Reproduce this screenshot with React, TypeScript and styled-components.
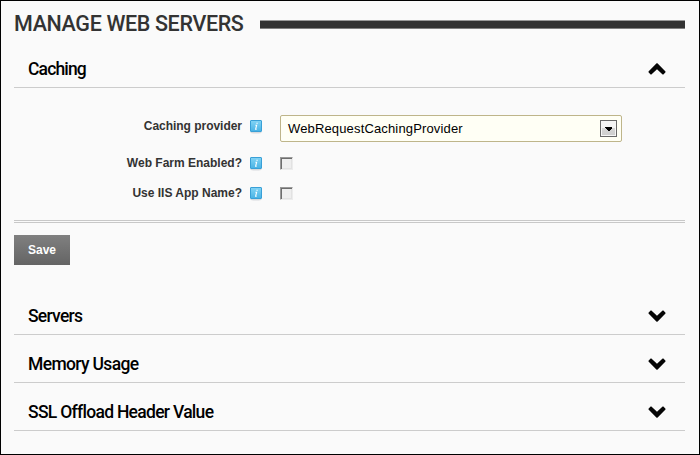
import React from "react";
import styled, { createGlobalStyle } from "styled-components";

const GlobalStyle = createGlobalStyle`
  * { box-sizing: border-box; }
  body { margin: 0; background: #fafafa; }
`;

const Page = styled.main`
  height: 455px;
  padding: 0 14px 0 13px;
  border: 1px solid #000;
  background: #fafafa;
  font-family: "Liberation Sans", Arial, sans-serif;
  overflow: hidden;
`;

const TitleRow = styled.header`
  display: flex;
  align-items: center;
  height: 39px;
  padding-top: 8px;
`;

const Title = styled.h1`
  flex: 0 0 246px;
  margin: 0;
  padding-bottom: 2px;
  color: #333;
  font: 500 21.5px/29px Roboto, sans-serif;
  letter-spacing: -0.36px;
  white-space: nowrap;
`;

const TitleRule = styled.div`
  flex: 1;
  height: 9px;
  background: #333;
  border-top: 1px solid #999;
  border-bottom: 1px solid #808080;
`;

const SectionHeader = styled.section`
  display: flex;
  align-items: center;
  justify-content: space-between;
  height: 48px;
  padding: 11px 19px 0 14px;
  border-bottom: 1px solid #ccc;
`;

const SectionTitle = styled.h2<{ $spacing: number }>`
  margin: 0;
  color: #000;
  font: 500 17.5px/36px Roboto, sans-serif;
  letter-spacing: ${({ $spacing }) => $spacing}px;
  white-space: nowrap;
`;

const Chevron = styled.svg<{ $open?: boolean }>`
  width: 18px;
  height: 12px;
  transform: ${({ $open }) => ($open ? "rotate(180deg)" : "none")};
`;

const Form = styled.form`
  display: grid;
  grid-template-rows: 27px 30px 30px;
  padding-top: 27px;
  height: 132px;
`;

const Row = styled.div<{ $offset?: number }>`
  display: grid;
  grid-template-columns: 228px 38px 342px;
  align-items: center;
  padding-top: ${({ $offset = 0 }) => $offset}px;
`;

const Label = styled.label<{ $spacing: number }>`
  justify-self: end;
  color: #333;
  font: bold 12px/15px "Liberation Sans", Arial, sans-serif;
  letter-spacing: ${({ $spacing }) => $spacing}px;
  margin-right: ${({ $spacing }) => -$spacing}px;
  padding-bottom: 4px;
`;

const InfoIcon = styled.svg`
  width: 14px;
  height: 15px;
  margin: 0 0 4px 7px;
`;

const Select = styled.div`
  display: flex;
  align-items: center;
  justify-content: space-between;
  height: 27px;
  padding: 0 4px 0 7px;
  border: 1px solid #beb58a;
  border-radius: 2px;
  background: #fffff5;
  color: #000;
  font-size: 13px;
  letter-spacing: 0.15px;
`;

const SelectArrow = styled.span`
  display: grid;
  place-items: center;
  width: 17px;
  height: 17px;
  border: 1px solid #686868;
  box-shadow: inset 0 0 0 1px #f5f5f5;
  background: linear-gradient(#f4f4f4 48%, #d5d5d5 50%, #cecece);
  svg { width: 7px; height: 4px; display: block; }
`;

const Checkbox = styled.span`
  width: 13px;
  height: 13px;
  margin-bottom: 4px;
  border: 1px solid #ececec;
  border-top-color: #999;
  border-left-color: #999;
  background: #eee;
  box-shadow: inset 1px 1px #6d6d6d, inset -1px -1px #e2e2e2;
`;

const Divider = styled.div`
  height: 3px;
  border-top: 1px solid #c8c8c8;
  border-bottom: 1px solid #c8c8c8;
`;

const SaveButton = styled.button`
  display: block;
  width: 56px;
  height: 30px;
  margin: 12px 0 22px;
  padding: 0;
  border: 0;
  background: linear-gradient(#808080, #646464);
  color: #fff;
  font: bold 12px/30px "Liberation Sans", Arial, sans-serif;
`;

function Info() {
  return (
    <InfoIcon viewBox="0 0 14 15" aria-hidden="true">
      <defs>
        <linearGradient id="info" x2="0" y2="1">
          <stop stopColor="#83d4f5" />
          <stop offset="1" stopColor="#47b2e5" />
        </linearGradient>
      </defs>
      <ellipse cx="7" cy="13.6" rx="5.5" ry="1" fill="#d8dadd" />
      <rect x="1.5" y="1.5" width="11" height="11" rx=".5" fill="url(#info)" stroke="#39a0d7" />
      <path d="M7.4 4.3h1.3M6.4 6.3h1.2L6.6 10.3h1.1" fill="none" stroke="#fff" strokeWidth="1.1" />
    </InfoIcon>
  );
}

function Section({ title, spacing, open }: { title: string; spacing: number; open?: boolean }) {
  return (
    <SectionHeader>
      <SectionTitle $spacing={spacing}>{title}</SectionTitle>
      <Chevron $open={open} viewBox="0 0 18 12" aria-hidden="true">
        <path d="M.5 2.7 2.6.5H3.4L9 5.7 14.6.5H15.4L17.5 2.7V3.6L9.4 11.7H8.6L.5 3.6Z" fill="#050505" />
      </Chevron>
    </SectionHeader>
  );
}

export default function App() {
  return (
    <>
      <GlobalStyle />
      <Page>
        <TitleRow>
          <Title>MANAGE WEB SERVERS</Title>
          <TitleRule />
        </TitleRow>
        <Section title="Caching" spacing={-0.85} open />
        <Form>
          <Row>
            <Label $spacing={-0.03}>Caching provider</Label>
            <Info />
            <Select>
              <span>WebRequestCachingProvider</span>
              <SelectArrow>
                <svg viewBox="0 0 7 4" shapeRendering="crispEdges"><path d="M0 0h7v1L4 4H3L0 1Z" /></svg>
              </SelectArrow>
            </Select>
          </Row>
          <Row $offset={14}>
            <Label $spacing={0}>Web Farm Enabled?</Label>
            <Info />
            <Checkbox role="checkbox" aria-checked={false} />
          </Row>
          <Row $offset={14}>
            <Label $spacing={0}>Use IIS App Name?</Label>
            <Info />
            <Checkbox role="checkbox" aria-checked={false} />
          </Row>
        </Form>
        <Divider />
        <SaveButton type="button">Save</SaveButton>
        <Section title="Servers" spacing={-0.75} />
        <Section title="Memory Usage" spacing={-0.65} />
        <Section title="SSL Offload Header Value" spacing={-0.71} />
      </Page>
    </>
  );
}
